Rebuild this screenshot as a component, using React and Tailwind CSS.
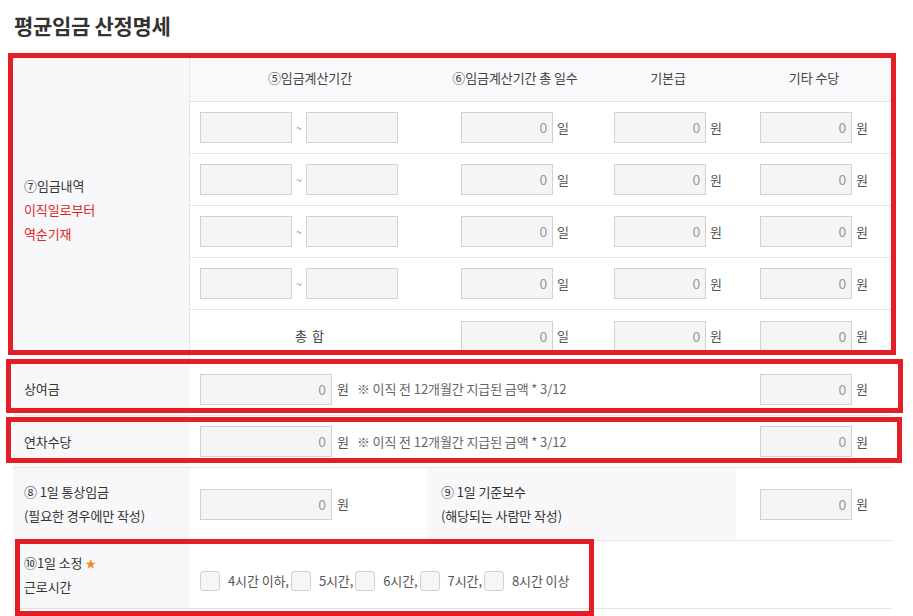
import React from "react";

const Box = ({ w = "w-[92px]" }) => (
  <div className={`${w} h-[31px] border border-[#d2d2d2] bg-[#f5f5f5] text-right pr-[5px] text-[14px] leading-[29px] text-[#999]`}>0</div>
);

const Empty = () => <div className="w-[92px] h-[31px] border border-[#d2d2d2] bg-[#f5f5f5]" />;

const Num = ({ unit }) => (
  <div className="flex items-center justify-center gap-[4px]">
    <Box />
    <span className="text-[#555]">{unit}</span>
  </div>
);

const Period = () => (
  <div className="flex items-center pl-[10px]">
    <Empty />
    <span className="w-[14px] text-center text-[10px] text-[#888]">~</span>
    <Empty />
  </div>
);

const Check = ({ label }) => (
  <div className="flex items-center">
    <div className="w-[20px] h-[20px] border border-[#d0d0d0] rounded-[3px] bg-[#f6f6f6]" />
    <span className="ml-[8px] mr-[2px] text-[#555]">{label}</span>
  </div>
);

export default function App() {
  const rows = [0, 1, 2, 3];
  return (
    <div className="relative w-[913px] h-[616px] overflow-hidden bg-white text-[13px] tracking-[-0.1px] text-[#333] font-['Noto_Sans_CJK_KR',sans-serif]">
      <h2 className="h-[55px] pl-[14px] pt-[10px] text-[21px] leading-[30px] font-bold tracking-[-0.3px] text-[#333]">평균임금 산정명세</h2>

      <div className="ml-[13px] w-[879px]">
        {/* main wage table */}
        <div className="flex border-b border-[#e6e6e6]">
          <div className="w-[177px] shrink-0 bg-[#f8f8fa] border-r border-[#e6e6e6] flex flex-col justify-center pl-[11px] leading-[24px] pt-[2px]">
            <div>⑦임금내역</div>
            <div className="text-[#d9261c]">이직일로부터</div>
            <div className="text-[#d9261c]">역순기재</div>
          </div>
          <div className="flex-1 flex flex-col">
            <div className="h-[47px] grid grid-cols-[240px_170px_136px_156px] items-center bg-[#f9f9fb] border-b border-[#e6e6e6] text-[#444] text-center">
              <div>⑤임금계산기간</div>
              <div>⑥임금계산기간 총 일수</div>
              <div>기본급</div>
              <div>기타 수당</div>
            </div>
            {rows.map((r) => (
              <div key={r} className="h-[52px] grid grid-cols-[240px_170px_136px_156px] items-center border-b border-[#e6e6e6]">
                <Period />
                <Num unit="일" />
                <Num unit="원" />
                <Num unit="원" />
              </div>
            ))}
            <div className="h-[52px] grid grid-cols-[240px_170px_136px_156px] items-center">
              <div className="text-center text-[#444] tracking-[1px]">총 합</div>
              <Num unit="일" />
              <Num unit="원" />
              <Num unit="원" />
            </div>
          </div>
        </div>

        {/* 상여금 */}
        <div className="h-[53px] flex border-b border-[#e6e6e6]">
          <div className="w-[177px] shrink-0 bg-[#f8f8fa] flex items-center pl-[11px]">상여금</div>
          <div className="flex-1 flex items-center pl-[10px]">
            <Box w="w-[132px]" />
            <span className="ml-[5px] text-[#555]">원</span>
            <span className="ml-[8px] text-[#666]">※ 이직 전 12개월간 지급된 금액 * 3/12</span>
          </div>
          <div className="w-[156px] flex items-center justify-center"><Num unit="원" /></div>
        </div>

        {/* 연차수당 */}
        <div className="h-[52px] flex border-b border-[#e6e6e6]">
          <div className="w-[177px] shrink-0 bg-[#f8f8fa] flex items-center pl-[11px]">연차수당</div>
          <div className="flex-1 flex items-center pl-[10px]">
            <Box w="w-[132px]" />
            <span className="ml-[5px] text-[#555]">원</span>
            <span className="ml-[8px] text-[#666]">※ 이직 전 12개월간 지급된 금액 * 3/12</span>
          </div>
          <div className="w-[156px] flex items-center justify-center"><Num unit="원" /></div>
        </div>

        {/* ⑧ ⑨ */}
        <div className="h-[73px] flex border-b border-[#e6e6e6]">
          <div className="w-[177px] shrink-0 bg-[#f8f8fa] flex flex-col justify-center pl-[11px] leading-[24px]">
            <div>⑧ 1일 통상임금</div>
            <div>(필요한 경우에만 작성)</div>
          </div>
          <div className="w-[237px] shrink-0 flex items-center pl-[10px]">
            <Box w="w-[132px]" />
            <span className="ml-[5px] text-[#555]">원</span>
          </div>
          <div className="w-[309px] shrink-0 bg-[#f8f8fa] flex flex-col justify-center pl-[14px] leading-[24px]">
            <div>⑨ 1일 기준보수</div>
            <div>(해당되는 사람만 작성)</div>
          </div>
          <div className="flex-1 flex items-center justify-center"><Num unit="원" /></div>
        </div>

        {/* ⑩ */}
        <div className="h-[68px] flex border-b border-[#e6e6e6]">
          <div className="w-[177px] shrink-0 bg-[#f8f8fa] flex flex-col justify-center pl-[11px] leading-[24px]">
            <div>⑩1일 소정 <span className="text-[11px] text-[#f08a24]">★</span></div>
            <div>근로시간</div>
          </div>
          <div className="flex-1 flex items-center pl-[10px] pt-[12px]">
            <Check label="4시간 이하," />
            <Check label="5시간," />
            <Check label="6시간," />
            <Check label="7시간," />
            <Check label="8시간 이상" />
          </div>
        </div>
      </div>

      {/* red annotation boxes */}
      <div className="absolute left-[8px] top-[53px] w-[888px] h-[302px] border-[5px] border-[#e41e26] pointer-events-none" />
      <div className="absolute left-[6px] top-[359px] w-[897px] h-[54px] border-[5px] border-[#e41e26] pointer-events-none" />
      <div className="absolute left-[6px] top-[417px] w-[896px] h-[46px] border-[5px] border-[#e41e26] pointer-events-none" />
      <div className="absolute left-[15px] top-[539px] w-[579px] h-[77px] border-[5px] border-[#e41e26] pointer-events-none" />
    </div>
  );
}
